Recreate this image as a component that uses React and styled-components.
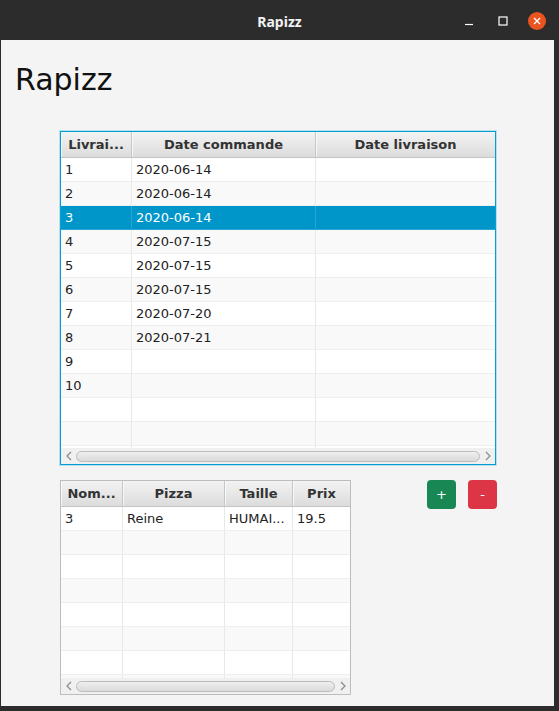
import React from 'react';
import styled, { createGlobalStyle } from 'styled-components';

const GlobalStyle = createGlobalStyle`
  html, body {
    margin: 0;
    padding: 0;
    background: #2c2c2c;
  }
`;

const mainColumns = [
  { title: 'Livrai...', width: 71 },
  { title: 'Date commande', width: 184 },
  { title: 'Date livraison', width: 179 },
];

const deliveries = [
  ['1', '2020-06-14', ''],
  ['2', '2020-06-14', ''],
  ['3', '2020-06-14', ''],
  ['4', '2020-07-15', ''],
  ['5', '2020-07-15', ''],
  ['6', '2020-07-15', ''],
  ['7', '2020-07-20', ''],
  ['8', '2020-07-21', ''],
  ['9', '', ''],
  ['10', '', ''],
];

const pizzaColumns = [
  { title: 'Nom...', width: 62 },
  { title: 'Pizza', width: 102 },
  { title: 'Taille', width: 68 },
  { title: 'Prix', width: 57 },
];

const pizzas = [['3', 'Reine', 'HUMAI...', '19.5']];

const Chevron = ({ dir }) => (
  <svg width="6" height="10" viewBox="0 0 6 10">
    <polyline
      points={dir === 'left' ? '5,1 1,5 5,9' : '1,1 5,5 1,9'}
      fill="none"
      stroke="#8a8a8a"
      strokeWidth="1.2"
    />
  </svg>
);

const DataTable = ({ columns, rows, bodyHeight, selected, focused }) => {
  const template = columns.map((c) => `${c.width}px`).join(' ');
  const rowCount = Math.ceil(bodyHeight / 24);
  const allRows = Array.from({ length: rowCount }, (_, i) => rows[i] || columns.map(() => ''));

  return (
    <Frame $focused={focused}>
      <HeaderRow $cols={template}>
        {columns.map((c) => (
          <HeaderCell key={c.title}>{c.title}</HeaderCell>
        ))}
      </HeaderRow>
      <Body style={{ height: bodyHeight }}>
        {allRows.map((r, i) => (
          <Row key={i} $cols={template} $odd={i % 2 === 1} $selected={i === selected}>
            {r.map((v, j) => (
              <Cell key={j} $selected={i === selected}>{v}</Cell>
            ))}
          </Row>
        ))}
      </Body>
      <ScrollBar>
        <Arrow><Chevron dir="left" /></Arrow>
        <Thumb />
        <Arrow><Chevron dir="right" /></Arrow>
      </ScrollBar>
    </Frame>
  );
};

const App = () => (
  <>
    <GlobalStyle />
    <Window>
      <TitleBar>
        <span />
        <WindowTitle>Rapizz</WindowTitle>
        <WindowButtons>
          <WindowButton>
            <svg width="10" height="10" viewBox="0 0 10 10">
              <line x1="1" y1="8.5" x2="9" y2="8.5" stroke="#fff" strokeWidth="1.2" />
            </svg>
          </WindowButton>
          <WindowButton>
            <svg width="10" height="10" viewBox="0 0 10 10">
              <rect x="1" y="1" width="8" height="8" fill="none" stroke="#fff" strokeWidth="1.2" />
            </svg>
          </WindowButton>
          <WindowButton>
            <CloseCircle>
              <svg width="10" height="10" viewBox="0 0 10 10">
                <path d="M2 2 L8 8 M8 2 L2 8" stroke="#fff" strokeWidth="1.4" />
              </svg>
            </CloseCircle>
          </WindowButton>
        </WindowButtons>
      </TitleBar>

      <Content>
        <Heading>Rapizz</Heading>
        <MainSection>
          <DataTable columns={mainColumns} rows={deliveries} bodyHeight={290} selected={2} focused />
        </MainSection>
        <BottomSection>
          <DataTable columns={pizzaColumns} rows={pizzas} bodyHeight={171} selected={-1} />
          <Actions>
            <ActionButton $color="#198754">+</ActionButton>
            <ActionButton $color="#dc3545">-</ActionButton>
          </Actions>
        </BottomSection>
      </Content>
    </Window>
  </>
);

const Window = styled.div`
  width: 559px;
  height: 711px;
  display: flex;
  flex-direction: column;
  background: #2c2c2c;
  border-radius: 8px 8px 0 0;
  overflow: hidden;
`;

const TitleBar = styled.div`
  height: 40px;
  display: grid;
  grid-template-columns: 1fr auto 1fr;
  align-items: center;
  padding-top: 2px;
  box-sizing: border-box;
`;

const WindowTitle = styled.div`
  font-family: "Noto Sans", "DejaVu Sans", sans-serif;
  font-weight: bold;
  font-size: 14px;
  color: #f2f2f2;
`;

const WindowButtons = styled.div`
  justify-self: end;
  display: flex;
  padding-right: 5px;
`;

const WindowButton = styled.div`
  width: 34px;
  height: 24px;
  display: flex;
  align-items: center;
  justify-content: center;
`;

const CloseCircle = styled.div`
  width: 18px;
  height: 18px;
  border-radius: 50%;
  background: #e95420;
  display: flex;
  align-items: center;
  justify-content: center;
`;

const Content = styled.div`
  flex: 1;
  margin: 0 5px 5px 1px;
  background: #f4f4f4;
  padding-top: 22px;
  font-family: "DejaVu Sans", sans-serif;
`;

const Heading = styled.h1`
  margin: 0 0 0 14px;
  font-weight: normal;
  font-size: 30px;
  line-height: 36px;
  color: #111;
`;

const MainSection = styled.div`
  margin: 33px 0 0 59px;
  display: flex;
`;

const BottomSection = styled.div`
  margin: 15px 0 0 59px;
  display: flex;
  align-items: flex-start;
`;

const Actions = styled.div`
  display: flex;
  gap: 12px;
  margin-left: 76px;
`;

const ActionButton = styled.button`
  width: 29px;
  height: 29px;
  border: none;
  border-radius: 4px;
  background: ${(p) => p.$color};
  color: #fff;
  font-family: "DejaVu Sans", sans-serif;
  font-size: 13px;
  padding: 0;
  cursor: pointer;
`;

const Frame = styled.div`
  border: 1px solid ${(p) => (p.$focused ? '#039ed3' : '#bdbdbd')};
  box-shadow: ${(p) => (p.$focused ? '0 0 0 1px rgba(3, 158, 211, 0.25)' : 'none')};
  background: #fff;
  font-size: 13px;
`;

const HeaderRow = styled.div`
  display: grid;
  grid-template-columns: ${(p) => p.$cols};
  height: 26px;
  box-sizing: border-box;
  border-bottom: 1px solid #c4c4c4;
  background: linear-gradient(#f3f3f3, #dcdcdc);
`;

const HeaderCell = styled.div`
  display: flex;
  align-items: center;
  justify-content: center;
  font-weight: bold;
  color: #333;
  white-space: nowrap;
  overflow: hidden;
  border-right: 1px solid #c6c6c6;
  box-shadow: inset 1px 0 0 rgba(255, 255, 255, 0.7);

  &:last-child {
    border-right: none;
  }
`;

const Body = styled.div`
  overflow: hidden;
  background: #f9f9f9;
`;

const Row = styled.div`
  display: grid;
  grid-template-columns: ${(p) => p.$cols};
  height: 24px;
  box-sizing: border-box;
  border-bottom: 1px solid ${(p) => (p.$selected ? '#2ba6d4' : '#eeeeee')};
  background: ${(p) => (p.$selected ? '#0096c9' : p.$odd ? '#f9f9f9' : '#ffffff')};
`;

const Cell = styled.div`
  display: flex;
  align-items: center;
  padding: 0 4px;
  white-space: nowrap;
  overflow: hidden;
  color: ${(p) => (p.$selected ? '#ffffff' : '#222')};
  border-right: 1px solid ${(p) => (p.$selected ? '#25a5d3' : '#e8e8e8')};

  &:last-child {
    border-right: none;
  }
`;

const ScrollBar = styled.div`
  height: 16px;
  display: flex;
  align-items: center;
  background: #f0f0f0;
`;

const Arrow = styled.div`
  width: 15px;
  height: 16px;
  display: flex;
  align-items: center;
  justify-content: center;
`;

const Thumb = styled.div`
  flex: 1;
  height: 11px;
  box-sizing: border-box;
  border: 1px solid #bcbcbc;
  border-radius: 6px;
  background: linear-gradient(#efefef, #dadada);
`;

export default App;
